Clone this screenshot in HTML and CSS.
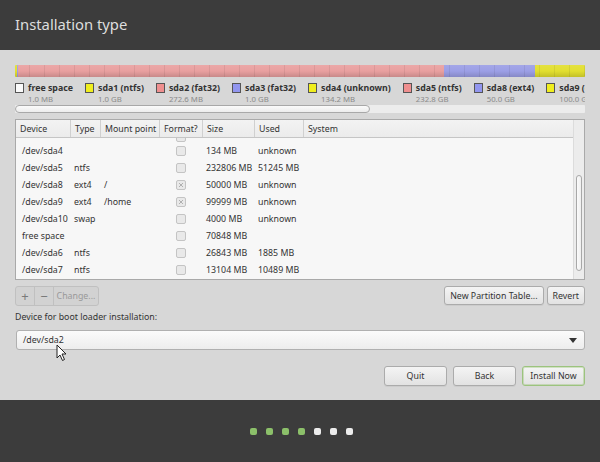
FILE: index.html
```html
<!DOCTYPE html>
<html>
<head>
<meta charset="utf-8">
<link rel="stylesheet" href="styles.css">
</head>
<body>
<div class="app">
  <header class="top"><h1 class="title">Installation type</h1></header>
  <main class="content">
    <div class="pbar">
      <span class="seg yellow" style="width:2px"></span>
      <span class="seg blue" style="width:1px"></span>
      <span class="seg pink" style="width:426px"></span>
      <span class="seg blue" style="width:91px"></span>
      <span class="seg yellow" style="width:50px"></span>
    </div>
    <div class="legend">
      <div class="litem"><span class="lbox white"></span><div class="ltext"><span class="lname">free space</span><span class="lsize">1.0 MB</span></div></div>
      <div class="litem"><span class="lbox yellow"></span><div class="ltext"><span class="lname">sda1 (ntfs)</span><span class="lsize">1.0 GB</span></div></div>
      <div class="litem"><span class="lbox pink"></span><div class="ltext"><span class="lname">sda2 (fat32)</span><span class="lsize">272.6 MB</span></div></div>
      <div class="litem"><span class="lbox blue"></span><div class="ltext"><span class="lname">sda3 (fat32)</span><span class="lsize">1.0 GB</span></div></div>
      <div class="litem"><span class="lbox yellow"></span><div class="ltext"><span class="lname">sda4 (unknown)</span><span class="lsize">134.2 MB</span></div></div>
      <div class="litem"><span class="lbox pink"></span><div class="ltext"><span class="lname">sda5 (ntfs)</span><span class="lsize">232.8 GB</span></div></div>
      <div class="litem"><span class="lbox blue"></span><div class="ltext"><span class="lname">sda8 (ext4)</span><span class="lsize">50.0 GB</span></div></div>
      <div class="litem"><span class="lbox yellow"></span><div class="ltext"><span class="lname">sda9 (ext4)</span><span class="lsize">100.0 GB</span></div></div>
    </div>
    <div class="hscroll"><div class="hthumb"></div></div>

    <div class="table">
      <div class="tmain">
        <div class="thead">
          <div class="c c-dev">Device</div>
          <div class="c c-type">Type</div>
          <div class="c c-mnt">Mount point</div>
          <div class="c c-fmt">Format?</div>
          <div class="c c-size">Size</div>
          <div class="c c-used">Used</div>
          <div class="c c-sys">System</div>
        </div>
        <div class="tbody">
          <div class="row partial">
            <div class="c c-dev"></div><div class="c c-type"></div><div class="c c-mnt"></div>
            <div class="c c-fmt"><span class="chk"></span></div>
            <div class="c c-size"></div><div class="c c-used"></div><div class="c c-sys"></div>
          </div>
          <div class="row">
            <div class="c c-dev">/dev/sda4</div><div class="c c-type"></div><div class="c c-mnt"></div>
            <div class="c c-fmt"><span class="chk"></span></div>
            <div class="c c-size">134 MB</div><div class="c c-used">unknown</div><div class="c c-sys"></div>
          </div>
          <div class="row">
            <div class="c c-dev">/dev/sda5</div><div class="c c-type">ntfs</div><div class="c c-mnt"></div>
            <div class="c c-fmt"><span class="chk"></span></div>
            <div class="c c-size">232806 MB</div><div class="c c-used">51245 MB</div><div class="c c-sys"></div>
          </div>
          <div class="row">
            <div class="c c-dev">/dev/sda8</div><div class="c c-type">ext4</div><div class="c c-mnt">/</div>
            <div class="c c-fmt"><span class="chk on"></span></div>
            <div class="c c-size">50000 MB</div><div class="c c-used">unknown</div><div class="c c-sys"></div>
          </div>
          <div class="row">
            <div class="c c-dev">/dev/sda9</div><div class="c c-type">ext4</div><div class="c c-mnt">/home</div>
            <div class="c c-fmt"><span class="chk on"></span></div>
            <div class="c c-size">99999 MB</div><div class="c c-used">unknown</div><div class="c c-sys"></div>
          </div>
          <div class="row">
            <div class="c c-dev">/dev/sda10</div><div class="c c-type">swap</div><div class="c c-mnt"></div>
            <div class="c c-fmt"><span class="chk"></span></div>
            <div class="c c-size">4000 MB</div><div class="c c-used">unknown</div><div class="c c-sys"></div>
          </div>
          <div class="row">
            <div class="c c-dev">free space</div><div class="c c-type"></div><div class="c c-mnt"></div>
            <div class="c c-fmt"><span class="chk"></span></div>
            <div class="c c-size">70848 MB</div><div class="c c-used"></div><div class="c c-sys"></div>
          </div>
          <div class="row">
            <div class="c c-dev">/dev/sda6</div><div class="c c-type">ntfs</div><div class="c c-mnt"></div>
            <div class="c c-fmt"><span class="chk"></span></div>
            <div class="c c-size">26843 MB</div><div class="c c-used">1885 MB</div><div class="c c-sys"></div>
          </div>
          <div class="row">
            <div class="c c-dev">/dev/sda7</div><div class="c c-type">ntfs</div><div class="c c-mnt"></div>
            <div class="c c-fmt"><span class="chk"></span></div>
            <div class="c c-size">13104 MB</div><div class="c c-used">10489 MB</div><div class="c c-sys"></div>
          </div>
        </div>
      </div>
      <div class="vscroll"><div class="vthumb"></div></div>
    </div>

    <div class="toolbar">
      <div class="tgroup">
        <span class="tbtn sym">+</span>
        <span class="tbtn sym">−</span>
        <span class="tbtn txt">Change...</span>
      </div>
      <div class="tright">
        <button class="btn small">New Partition Table...</button>
        <button class="btn small">Revert</button>
      </div>
    </div>

    <div class="bootlabel">Device for boot loader installation:</div>
    <div class="combo">
      <span>/dev/sda2</span>
      <svg class="arrow" width="8" height="5" viewBox="0 0 8 5"><path d="M0 0H8L4 5Z" fill="#333"/></svg>
    </div>

    <div class="actions">
      <button class="btn act">Quit</button>
      <button class="btn act">Back</button>
      <button class="btn act primary">Install Now</button>
    </div>

    <svg class="cursor" width="12" height="18" viewBox="0 0 12 18">
      <path d="M1 1 L1 14 L4 11 L6.5 16.5 L8.5 15.5 L6 10 L10 10 Z" fill="#fff" stroke="#222" stroke-width="1" stroke-linejoin="round"/>
    </svg>
  </main>
  <footer class="bottom">
    <div class="dots">
      <span class="dot done"></span><span class="dot done"></span><span class="dot done"></span><span class="dot done"></span>
      <span class="dot"></span><span class="dot"></span><span class="dot"></span>
    </div>
  </footer>
</div>
</body>
</html>
```
FILE: styles.css
```css
* { box-sizing: border-box; }
html, body { margin: 0; padding: 0; }
body {
  width: 600px;
  height: 462px;
  overflow: hidden;
  font-family: "Noto Sans", "DejaVu Sans", sans-serif;
  font-size: 8.8px;
  color: #333;
  background: #3c3c3c;
}
.app { display: flex; flex-direction: column; height: 462px; }
.top {
  height: 50px;
  background: #3c3c3c;
  display: flex;
  align-items: center;
  padding: 0 15px;
}
.title {
  margin: 0;
  font-weight: normal;
  font-size: 14.8px;
  color: #dedede;
  padding-bottom: 2px;
}
.content {
  position: relative;
  height: 350px;
  background: #d7d7d7;
  padding: 15px 15px 0 15px;
  display: flex;
  flex-direction: column;
}
.pbar {
  height: 12px;
  display: flex;
  position: relative;
  border-radius: 1px;
  overflow: hidden;
  flex-shrink: 0;
}
.pbar::after {
  content: "";
  position: absolute;
  inset: 0;
  background:
    repeating-linear-gradient(90deg, transparent 0, transparent 14px, rgba(0,0,0,0.07) 14px, rgba(0,0,0,0.07) 15px),
    linear-gradient(180deg, rgba(255,255,255,0.08) 0%, rgba(0,0,0,0) 50%, rgba(0,0,0,0.14) 100%);
}
.seg { display: block; height: 100%; }
.seg.pink { background: #e9a0a0; }
.seg.blue { background: #9c9fe6; }
.seg.yellow { background: #e2df30; }

.legend {
  display: flex;
  gap: 12px;
  margin-top: 5px;
  height: 22px;
  overflow: hidden;
  white-space: nowrap;
  flex-shrink: 0;
}
.litem { display: flex; gap: 4px; flex-shrink: 0; }
.lbox {
  width: 9px; height: 10px;
  border: 1px solid #555;
  margin-top: 1px;
  flex-shrink: 0;
}
.lbox.white { background: #fafafa; }
.lbox.yellow { background: #f0ee1e; }
.lbox.pink { background: #ef8f8f; }
.lbox.blue { background: #9296ef; }
.ltext { display: flex; flex-direction: column; }
.lname { font-weight: bold; font-size: 8.8px; line-height: 12px; color: #333; }
.lsize { font-size: 7.8px; line-height: 10px; color: #8a8a8a; }

.hscroll {
  margin-top: 1px;
  height: 8px;
  background: #ececec;
  border-radius: 1px;
  position: relative;
  flex-shrink: 0;
}
.hthumb {
  width: 355px;
  height: 8px;
  background: linear-gradient(#fbfbfb, #ececec);
  border: 1px solid #a8a8a8;
  border-radius: 4px;
}

.table {
  margin-top: 6px;
  height: 161px;
  display: flex;
  background: #f7f7f7;
  border: 1px solid #a9a9a9;
  overflow: hidden;
  flex-shrink: 0;
}
.tmain { flex: 1; display: flex; flex-direction: column; overflow: hidden; }
.thead {
  height: 18px;
  display: flex;
  align-items: center;
  background: linear-gradient(#f3f3f3, #ebebeb);
  border-bottom: 1px solid #c5c5c5;
  flex-shrink: 0;
}
.thead .c {
  height: 100%;
  display: flex;
  align-items: center;
  border-right: 1px solid #d0d0d0;
  padding-left: 4px;
}
.thead .c-sys { border-right: none; }
.c { flex-shrink: 0; white-space: nowrap; overflow: hidden; }
.c-dev { width: 55px; }
.c-type { width: 30px; }
.c-mnt { width: 59px; }
.c-fmt { width: 43px; }
.c-size { width: 52px; }
.c-used { width: 49px; }
.c-sys { flex: 1; }
.tbody { display: flex; flex-direction: column; }
.row { height: 17px; display: flex; align-items: center; flex-shrink: 0; }
.row .c { padding-left: 6px; }
.row .c-type { padding-left: 3px; }
.row .c-mnt { padding-left: 3px; }
.row .c-size { padding-left: 3px; }
.row .c-used { padding-left: 3px; }
.row .c-fmt { padding-left: 16px; display: flex; align-items: center; }
.row.partial { height: 4px; align-items: flex-end; }
.row.partial .c-fmt { align-items: flex-end; height: 4px; }
.row.partial .chk { flex-shrink: 0; }
.chk {
  width: 10px; height: 10px;
  border: 1px solid #c4c4c4;
  border-radius: 2px;
  background: #e9e9e9;
  display: inline-block;
  position: relative;
  flex-shrink: 0;
}
.chk.on::after {
  content: "";
  position: absolute;
  left: 2px; top: 2px;
  width: 4px; height: 4px;
  background:
    linear-gradient(45deg, transparent 38%, #b0b0b0 38%, #b0b0b0 62%, transparent 62%),
    linear-gradient(-45deg, transparent 38%, #b0b0b0 38%, #b0b0b0 62%, transparent 62%);
}
.vscroll {
  width: 11px;
  background: #ececec;
  border-left: 1px solid #dcdcdc;
  position: relative;
  padding: 55px 2px 0 2px;
}
.vthumb {
  width: 6px;
  height: 96px;
  background: linear-gradient(90deg, #fbfbfb, #efefef);
  border: 1px solid #a8a8a8;
  border-radius: 3px;
}

.toolbar {
  margin-top: 6px;
  display: flex;
  justify-content: space-between;
  align-items: flex-start;
  flex-shrink: 0;
}
.tgroup {
  display: flex;
  height: 20px;
  border: 1px solid #c0c0c0;
  border-radius: 3px;
  background: #d2d2d2;
  overflow: hidden;
}
.tbtn {
  display: flex; align-items: center; justify-content: center;
  color: #8c8c8c;
  height: 100%;
}
.tbtn.sym { width: 19px; font-size: 13px; border-right: 1px solid #c0c0c0; color: #7a7a7a; }
.tbtn.txt { width: 44px; font-size: 8.8px; color: #999; }
.tright { display: flex; gap: 3px; }
.btn {
  font-family: "Noto Sans", "DejaVu Sans", sans-serif;
  font-size: 8.8px;
  color: #333;
  background: linear-gradient(#f4f4f4, #e2e2e2);
  border: 1px solid #ababab;
  border-radius: 3px;
  padding: 0;
  margin: 0;
  box-shadow: 0 1px 0 rgba(0,0,0,0.05);
}
.btn.small { height: 19px; padding: 0 5px; }
.bootlabel { margin-top: 5px; line-height: 12px; flex-shrink: 0; }
.combo {
  margin-top: 7px;
  margin-left: 1px;
  height: 20px;
  background: linear-gradient(#fbfbfb, #ededed);
  border: 1px solid #b0b0b0;
  border-radius: 3px;
  display: flex;
  align-items: center;
  justify-content: space-between;
  padding: 0 6px 0 6px;
  flex-shrink: 0;
}
.arrow { margin-right: 1px; }
.actions {
  margin-top: 16px;
  display: flex;
  justify-content: flex-end;
  gap: 6px;
  flex-shrink: 0;
}
.btn.act { width: 63px; height: 20px; }
.btn.primary { border-color: #9cc37e; box-shadow: 0 0 0 1px rgba(140,190,100,0.35) inset; }
.cursor { position: absolute; left: 56px; top: 294px; }

.bottom {
  flex: 1;
  background: #3c3c3c;
  display: flex;
  justify-content: center;
  padding-top: 28px;
}
.dots { display: flex; gap: 9px; height: 7px; margin-left: 3px; }
.dot { width: 7px; height: 7px; border-radius: 2px; background: #ececec; }
.dot.done { background: #8cc06a; }
```
